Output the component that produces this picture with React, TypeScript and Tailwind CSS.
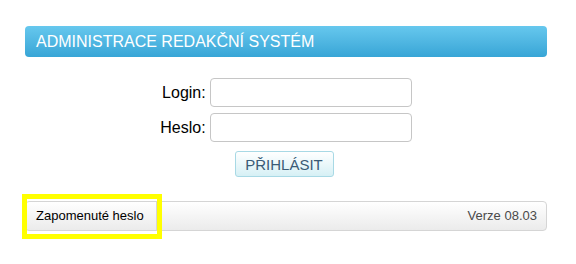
import React from 'react';

const App = () => {
  return (
    <div className="relative w-[576px] h-[264px] bg-white pl-[25px] pr-[29px] pt-[26px] font-['Liberation_Sans',Arial,sans-serif] text-black">
      {/* Header */}
      <div className="h-[31px] rounded-[4px] bg-linear-to-b from-[#66c8ee] to-[#37a5d6] flex items-center pl-[11px]">
        <h1 className="text-white text-[16px] leading-none">ADMINISTRACE REDAKČNÍ SYSTÉM</h1>
      </div>

      {/* Login form */}
      <div className="mt-[21px] flex flex-col items-center">
        <div className="grid grid-cols-[auto_auto] gap-x-[4px] gap-y-[6px] items-center">
          <label className="text-[16px] text-right">Login:</label>
          <input
            type="text"
            className="w-[202px] h-[29px] border border-[#c6c6c6] rounded-[4px] bg-white"
          />
          <label className="text-[16px] text-right">Heslo:</label>
          <input
            type="password"
            className="w-[202px] h-[29px] border border-[#c6c6c6] rounded-[4px] bg-white"
          />
        </div>
        <button className="mt-[9px] ml-[-4px] w-[99px] h-[26px] rounded-[3px] border border-[#a8d9e5] bg-linear-to-b from-white to-[#d6f0f5] text-[15px] text-[#3a5b76] leading-none">
          PŘIHLÁSIT
        </button>
      </div>

      {/* Footer */}
      <div className="mt-[24px] h-[30px] rounded-[4px] border border-[#d5d5d5] bg-linear-to-b from-white to-[#ebebeb] flex items-center justify-between text-[13px]">
        <span className="h-full flex items-center pl-[10px] w-[131px] border-r border-[#d5d5d5]">Zapomenuté heslo</span>
        <span className="pr-[9px] text-[#4a4a4a]">Verze 08.03</span>
      </div>

      {/* Highlight */}
      <div className="absolute left-[22px] top-[194px] w-[140px] h-[45px] border-[5px] border-[#ffff00]" />
    </div>
  );
};

export default App;
